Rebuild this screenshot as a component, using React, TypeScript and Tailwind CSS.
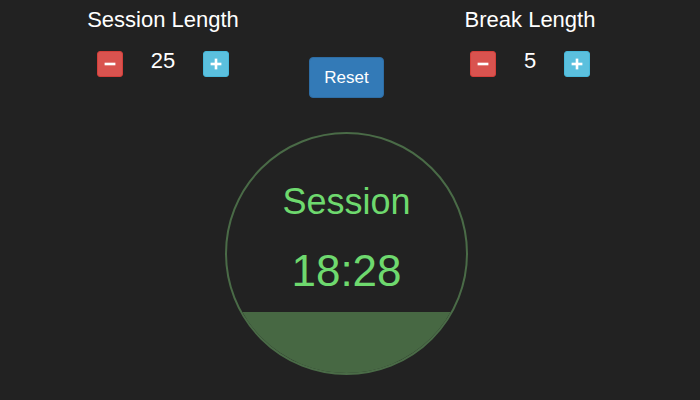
import { Minus, Plus } from 'lucide-react';

// timer is a flat number here; only the picture matters
const session = { label: 'Session', time: '18:28', fill: 61 };

function StepButton({ kind }: { kind: 'down' | 'up' }) {
  const cls =
    kind === 'down'
      ? 'bg-[#d9534f] border-[#d43f3a]'
      : 'bg-[#5bc0de] border-[#46b8da]';
  return (
    <button
      className={`flex h-[26px] w-[26px] items-center justify-center rounded-[3px] border ${cls}`}
    >
      {kind === 'down' ? (
        <Minus size={14} strokeWidth={4.5} strokeLinecap="square" color="#fff" />
      ) : (
        <Plus size={14} strokeWidth={4.5} strokeLinecap="square" color="#fff" />
      )}
    </button>
  );
}

function LengthControl({ title, value }: { title: string; value: number }) {
  return (
    <div className="flex w-[184px] flex-col items-center">
      <h2 className="mt-[5px] whitespace-nowrap text-[22px] leading-[30px] text-white">{title}</h2>
      <div className="mt-[15px] flex items-center">
        <StepButton kind="down" />
        <span className="mx-[28px] mb-[5px] text-[22px] leading-[22px] text-white">{value}</span>
        <StepButton kind="up" />
      </div>
    </div>
  );
}

export default function App() {
  return (
    <div className="h-[400px] w-full overflow-hidden bg-[#222222] font-['Liberation_Sans',Arial,sans-serif]">
      <div className="ml-[71px] flex w-[551px] flex-col items-center">
        {/* controls */}
        <div className="flex w-full items-start">
          <LengthControl title="Session Length" value={25} />
          <div className="flex w-[183px] justify-center">
            <button className="mt-[57px] flex h-[41px] w-[75px] items-center justify-center rounded-[4px] border border-[#2e6da4] bg-[#337ab7] text-[17px] text-white">
              Reset
            </button>
          </div>
          <LengthControl title="Break Length" value={5} />
        </div>

        {/* timer */}
        <div className="mt-[34px] flex h-[243px] w-[243px] flex-col items-center overflow-hidden rounded-full border-2 border-[#4a6b47]">
          <div className="mt-[50px] text-[36px] leading-[36px] text-[#6ed96e]">{session.label}</div>
          <div className="mt-[29px] text-[44px] leading-[44px] text-[#6ed96e]">{session.time}</div>
          <div className="flex-1" />
          <div className="h-[61px] w-full bg-[#476843]" />
        </div>
      </div>
    </div>
  );
}
